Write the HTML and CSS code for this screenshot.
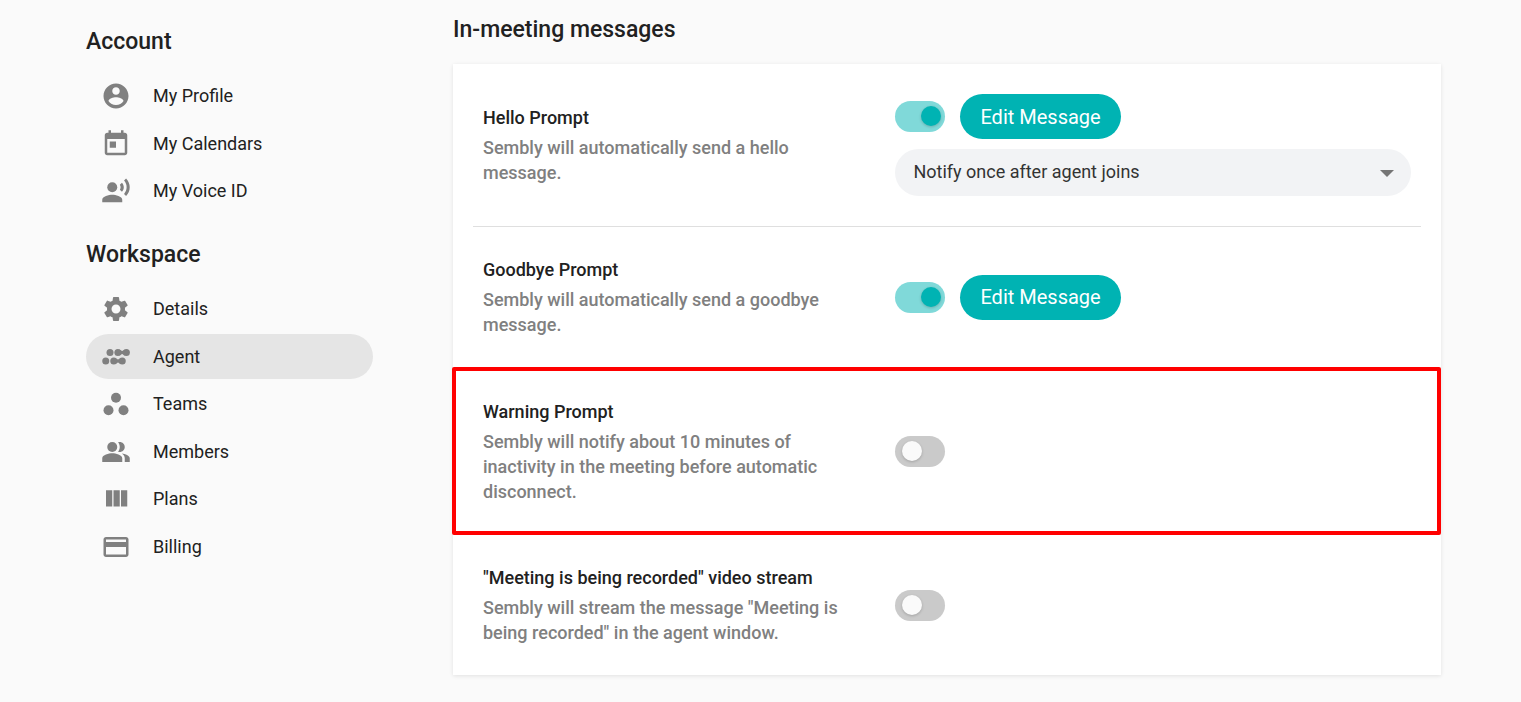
FILE: index.html
```html
<!DOCTYPE html>
<html lang="en">
<head>
    <meta charset="UTF-8">
    <title>Agent Settings</title>
    <meta name="viewport" content="width=device-width, initial-scale=1.0">
    <link rel="stylesheet" href="styles.css">
</head>
<body>
    <div class="page">
        <aside class="sidebar">
            <h2>Account</h2>
            <nav class="menu">
                <a href="#profile" class="menu-item">
                    <svg class="icon" viewBox="0 0 24 24"><path d="M12 2C6.48 2 2 6.48 2 12s4.48 10 10 10 10-4.48 10-10S17.52 2 12 2zm0 3c1.66 0 3 1.34 3 3s-1.34 3-3 3-3-1.34-3-3 1.34-3 3-3zm0 14.2c-2.5 0-4.71-1.28-6-3.22.03-1.99 4-3.08 6-3.08 1.99 0 5.97 1.09 6 3.08-1.29 1.94-3.5 3.22-6 3.22z"/></svg>
                    My Profile
                </a>
                <a href="#calendars" class="menu-item">
                    <svg class="icon" viewBox="0 0 24 24"><path d="M19 3h-1V1h-2v2H8V1H6v2H5c-1.11 0-1.99.9-1.99 2L3 19c0 1.1.89 2 2 2h14c1.1 0 2-.9 2-2V5c0-1.1-.9-2-2-2zm0 16H5V8h14v11zM7 10h5v5H7z"/></svg>
                    My Calendars
                </a>
                <a href="#voice" class="menu-item">
                    <svg class="icon" viewBox="0 0 24 24"><circle cx="9" cy="9" r="4"/><path d="M9 15c-2.67 0-8 1.34-8 4v2h16v-2c0-2.66-5.33-4-8-4zm7.76-9.64l-1.68 1.69c.84 1.18.84 2.71 0 3.89l1.68 1.69c2.02-2.02 2.02-5.07 0-7.27zM20.07 2l-1.63 1.63c2.77 3.02 2.77 7.56 0 10.74L20.07 16c3.9-3.89 3.91-9.95 0-14z"/></svg>
                    My Voice ID
                </a>
            </nav>

            <h2>Workspace</h2>
            <nav class="menu">
                <a href="#details" class="menu-item">
                    <svg class="icon" viewBox="0 0 24 24"><path d="M19.14 12.94c.04-.3.06-.61.06-.94 0-.32-.02-.64-.07-.94l2.03-1.58c.18-.14.23-.41.12-.61l-1.92-3.32c-.12-.22-.37-.29-.59-.22l-2.39.96c-.5-.38-1.03-.7-1.62-.94l-.36-2.54c-.04-.24-.24-.41-.48-.41h-3.84c-.24 0-.43.17-.47.41l-.36 2.54c-.59.24-1.13.57-1.62.94l-2.39-.96c-.22-.08-.47 0-.59.22L2.74 8.87c-.12.21-.08.47.12.61l2.03 1.58c-.05.3-.09.63-.09.94s.02.64.07.94l-2.03 1.58c-.18.14-.23.41-.12.61l1.92 3.32c.12.22.37.29.59.22l2.39-.96c.5.38 1.03.7 1.62.94l.36 2.54c.05.24.24.41.48.41h3.84c.24 0 .44-.17.47-.41l.36-2.54c.59-.24 1.13-.56 1.62-.94l2.39.96c.22.08.47 0 .59-.22l1.92-3.32c.12-.22.07-.47-.12-.61l-2.01-1.58zM12 15.6c-1.98 0-3.6-1.62-3.6-3.6s1.62-3.6 3.6-3.6 3.6 1.62 3.6 3.6-1.62 3.6-3.6 3.6z"/></svg>
                    Details
                </a>
                <a href="#agent" class="menu-item active">
                    <svg class="icon" viewBox="0 0 24 24"><circle cx="7.2" cy="8.4" r="2.8"/><circle cx="13.5" cy="8.4" r="2.8"/><circle cx="20.3" cy="8.4" r="2.8"/><circle cx="3.8" cy="15.2" r="2.8"/><circle cx="10.2" cy="15.2" r="2.8"/><circle cx="17" cy="15.2" r="2.8"/><path d="M14.5 6l2.4 1.2L19.3 6v4.800l-2.400-1.200-2.400 1.200zM11.200 12.800l2.400 1.200 2.400-1.200v4.800l-2.400-1.200-2.400 1.200z"/></svg>
                    Agent
                </a>
                <a href="#teams" class="menu-item">
                    <svg class="icon" viewBox="0 0 24 24"><circle cx="12" cy="7" r="4"/><circle cx="6" cy="17" r="4"/><circle cx="18" cy="17" r="4"/></svg>
                    Teams
                </a>
                <a href="#members" class="menu-item">
                    <svg class="icon" viewBox="0 0 24 24"><circle cx="9" cy="8" r="4"/><path d="M16.67 13.13C18.04 14.06 19 15.32 19 17v3h4v-3c0-2.18-3.57-3.47-6.33-3.87zM15 12c2.21 0 4-1.79 4-4s-1.79-4-4-4c-.47 0-.91.1-1.33.24C14.5 5.27 15 6.58 15 8s-.5 2.73-1.33 3.76c.42.14.86.24 1.33.24zM9 13c-2.67 0-8 1.34-8 4v3h16v-3c0-2.66-5.33-4-8-4z"/></svg>
                    Members
                </a>
                <a href="#plans" class="menu-item">
                    <svg class="icon" viewBox="0 0 24 24"><path d="M10 18h5V5h-5v13zm-6 0h5V5H4v13zM16 5v13h5V5h-5z"/></svg>
                    Plans
                </a>
                <a href="#billing" class="menu-item">
                    <svg class="icon" viewBox="0 0 24 24"><path d="M20 4H4c-1.11 0-1.99.89-1.99 2L2 18c0 1.11.89 2 2 2h16c1.11 0 2-.89 2-2V6c0-1.11-.89-2-2-2zm0 14H4v-6h16v6zm0-10H4V6h16v2z"/></svg>
                    Billing
                </a>
            </nav>
        </aside>

        <main class="content">
            <h2>In-meeting messages</h2>
            <div class="card">
                <div class="row">
                    <div class="row-text">
                        <label for="hello">Hello Prompt</label>
                        <p>Sembly will automatically send a hello message.</p>
                    </div>
                    <div class="row-controls">
                        <input type="checkbox" id="hello" class="toggle" checked>
                        <button type="button" class="edit">Edit Message</button>
                        <div class="select">
                            <select aria-label="When to notify">
                                <option>Notify once after agent joins</option>
                                <option>Notify every participant</option>
                            </select>
                            <svg class="arrow" viewBox="0 0 14 7"><path d="M0 0h14L7 7z"/></svg>
                        </div>
                    </div>
                </div>

                <div class="row">
                    <div class="row-text">
                        <label for="goodbye">Goodbye Prompt</label>
                        <p>Sembly will automatically send a goodbye message.</p>
                    </div>
                    <div class="row-controls">
                        <input type="checkbox" id="goodbye" class="toggle" checked>
                        <button type="button" class="edit">Edit Message</button>
                    </div>
                </div>

                <div class="row highlight">
                    <div class="row-text">
                        <label for="warning">Warning Prompt</label>
                        <p>Sembly will notify about 10 minutes of inactivity in the meeting before automatic disconnect.</p>
                    </div>
                    <div class="row-controls">
                        <input type="checkbox" id="warning" class="toggle">
                    </div>
                </div>

                <div class="row">
                    <div class="row-text">
                        <label for="recorded">"Meeting is being recorded" video stream</label>
                        <p>Sembly will stream the message "Meeting is being recorded" in the agent window.</p>
                    </div>
                    <div class="row-controls">
                        <input type="checkbox" id="recorded" class="toggle">
                    </div>
                </div>
            </div>
        </main>
    </div>
</body>
</html>
```
FILE: styles.css
```css
* { box-sizing: border-box; font-family: Roboto, 'Liberation Sans', sans-serif; }
body { margin: 0; background: #fafafa; color: #212121; font-size: 18px; line-height: 25px; }
h2 { margin: 0; font-size: 23px; line-height: 30px; font-weight: 500; }
p { margin: 0; }

.page { display: flex; gap: 80px; padding: 15px 80px 27px 86px; }

/* sidebar */
.sidebar { flex: 0 0 287px; padding-top: 12px; }
.menu { display: flex; flex-direction: column; gap: 2px; margin: 16px 0 26px; }
.menu-item { display: flex; align-items: center; gap: 22px; height: 45px; padding: 0 15px; border-radius: 23px; color: #212121; text-decoration: none; }
.menu-item:nth-child(odd) { margin-bottom: 1px; }
.menu-item.active { background: #e5e5e5; }
.icon { width: 30px; height: 30px; fill: #808080; }

/* settings card */
.content { flex: 1; min-width: 0; }
.card { margin-top: 19px; padding: 0 20px; background: #fff; box-shadow: 0 1px 4px rgba(0,0,0,0.1); }
.row { display: grid; grid-template-columns: 4fr 5fr; align-items: center; padding: 30px 10px; border-bottom: 1px solid #dfdfdf; position: relative; }
.row:last-child { border-bottom: none; }
.row-text { padding-right: 40px; }
.row-text label { display: block; margin-bottom: 5px; font-weight: 500; }
.row-text p { color: #808080; font-weight: 500; }
.row-controls { display: flex; flex-wrap: wrap; align-items: center; gap: 10px 15px; }
.highlight { border-top: 1px solid transparent; }
.highlight::after { content: ""; position: absolute; inset: -2px -20px -1px -21px; border: 4px solid #f00; border-radius: 2px; pointer-events: none; }

.toggle { appearance: none; width: 50px; height: 31px; margin: 0; padding: 5px 7px; border-radius: 16px; background: #cacaca; cursor: pointer; }
.toggle::before { content: ""; display: block; width: 20px; height: 20px; border-radius: 50%; background: #fafafa; box-shadow: 0 1px 3px rgba(0,0,0,0.2); }
.toggle:checked { padding-left: 26px; padding-right: 4px; background: #80d9d9; }
.toggle:checked::before { background: #00b3b3; }

.edit { height: 45px; padding: 0 20px; border: none; border-radius: 23px; background: #00b3b3; color: #fff; font-size: 20px; cursor: pointer; }
.edit:hover { background: #009e9e; }

.select { position: relative; width: 100%; }
.select select { appearance: none; display: block; width: 100%; height: 47px; padding: 0 48px 2px 18px; border: none; border-radius: 24px; background: #f2f3f5; color: #333; font-size: 18px; }
.arrow { position: absolute; top: 21px; right: 17px; width: 14px; height: 7px; fill: #757575; pointer-events: none; }
```
